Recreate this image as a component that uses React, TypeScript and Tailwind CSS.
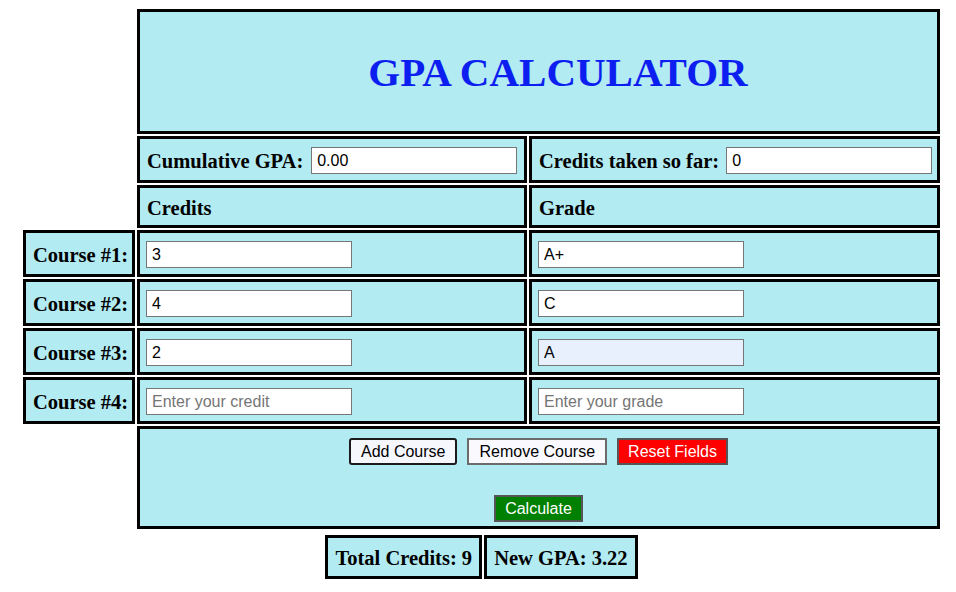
import React from "react";

const cell = "border-[3px] border-black bg-[#b2ebf2] flex items-center";
const label = "font-bold text-[20.5px] text-black whitespace-nowrap mt-[3px]";
const inputCls =
    "w-[206px] h-[27px] mt-[2px] border border-[#767676] px-[5px] text-[16px] text-black placeholder:text-[#757575] outline-none";

const courses = [
    {credit: "3", grade: "A+"},
    {credit: "4", grade: "C"},
    {credit: "2", grade: "A", filled: true},
    {credit: "", grade: ""},
];

const App = () => {
    return (
        <div
            className="w-[956px] h-[592px] bg-white pt-[9px] pl-[23px]"
            style={{fontFamily: '"Liberation Serif", serif'}}
        >
            <div className="grid grid-cols-[112px_390px_411px] gap-[2px]">
                {/* title */}
                <div className="col-start-2 col-span-2 h-[125px] border-[3px] border-black bg-[#b2ebf2] flex items-center justify-center pl-[39px] pt-[2px]">
                    <h1 className="font-bold text-[41px] text-[#0d1ff0] leading-none">GPA CALCULATOR</h1>
                </div>

                <div className={`col-start-2 h-[47px] px-[7px] gap-[8px] ${cell}`}>
                    <span className={label}>Cumulative GPA:</span>
                    <input
                        className={`${inputCls} bg-white`}
                        style={{fontFamily: '"Liberation Sans", sans-serif'}}
                        defaultValue="0.00"
                    />
                </div>
                <div className={`h-[47px] px-[7px] gap-[7px] ${cell}`}>
                    <span className={label}>Credits taken so far:</span>
                    <input
                        className={`${inputCls} bg-white`}
                        style={{fontFamily: '"Liberation Sans", sans-serif'}}
                        defaultValue="0"
                    />
                </div>

                <div className={`col-start-2 h-[43px] px-[7px] ${cell}`}>
                    <span className={label}>Credits</span>
                </div>
                <div className={`h-[43px] px-[7px] ${cell}`}>
                    <span className={label}>Grade</span>
                </div>

                {courses.map((c, i) => (
                    <React.Fragment key={i}>
                        <div className={`h-[47px] pl-[7px] ${cell}`}>
                            <span className={label}>Course #{i + 1}:</span>
                        </div>
                        <div className={`h-[47px] px-[6px] ${cell}`}>
                            <input
                                className={`${inputCls} bg-white`}
                                style={{fontFamily: '"Liberation Sans", sans-serif'}}
                                defaultValue={c.credit}
                                placeholder="Enter your credit"
                            />
                        </div>
                        <div className={`h-[47px] px-[6px] ${cell}`}>
                            <input
                                className={`${inputCls} ${c.filled ? "bg-[#e8f0fe]" : "bg-white"}`}
                                style={{fontFamily: '"Liberation Sans", sans-serif'}}
                                defaultValue={c.grade}
                                placeholder="Enter your grade"
                            />
                        </div>
                    </React.Fragment>
                ))}

                <div
                    className="col-start-2 col-span-2 h-[103px] border-[3px] border-black bg-[#b2ebf2] flex flex-col items-center pt-[9px] gap-[30px]"
                    style={{fontFamily: '"Liberation Sans", sans-serif'}}
                >
                    <div className="flex gap-[10px] text-[16px] leading-[18px]">
                        <button className="h-[27px] px-[10px] border-2 border-[#1b1b1b] rounded-[3px] bg-[#f6f6fd] text-black">
                            Add Course
                        </button>
                        <button className="h-[27px] px-[10px] border-2 border-[#6b6b6b] bg-[#fafafe] text-black">
                            Remove Course
                        </button>
                        <button className="h-[27px] px-[9px] border-2 border-[#555] bg-[#ff0000] text-white">
                            Reset Fields
                        </button>
                    </div>
                    <button className="h-[27px] px-[9px] border-2 border-[#555] bg-[#008000] text-white text-[16px] leading-[18px]">
                        Calculate
                    </button>
                </div>
            </div>

            <div className="w-[917px] flex justify-center gap-[2px] mt-[6px]">
                <div className={`h-[44px] px-[7px] ${cell}`}>
                    <span className={label}>Total Credits: 9</span>
                </div>
                <div className={`h-[44px] px-[7px] ${cell}`}>
                    <span className={label}>New GPA: 3.22</span>
                </div>
            </div>
        </div>
    );
};

export default App;
